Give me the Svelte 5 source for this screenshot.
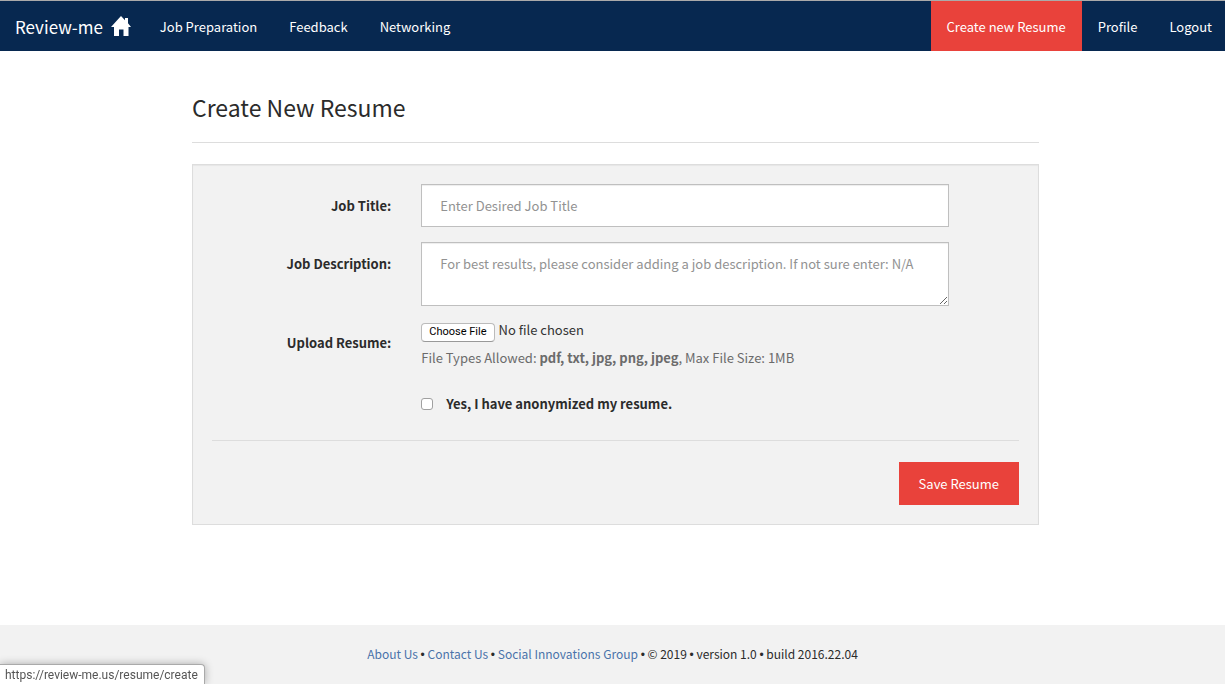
<script>
  let title = $state('');
  let description = $state('');
  let anonymized = $state(false);
</script>

<div class="page">
  <nav class="navbar">
    <a class="brand" href="#home">
      <span>Review-me</span>
      <svg class="home" viewBox="0 0 20 20" aria-hidden="true">
        <path d="M10 0 14 4.200V2H17V7.300L20 11H17.500V20H12.500V13.500H8V20H3V11H0Z" fill="#fff" />
      </svg>
    </a>
    <a href="#preparation">Job Preparation</a>
    <a href="#feedback">Feedback</a>
    <a href="#networking">Networking</a>
    <div class="right">
      <a class="active" href="#create">Create new Resume</a>
      <a href="#profile">Profile</a>
      <a class="last" href="#logout">Logout</a>
    </div>
  </nav>

  <main>
    <h1>Create New Resume</h1>
    <form class="panel">
      <div class="row">
        <label class="name" for="title">Job Title:</label>
        <div class="field">
          <input class="control" id="title" type="text" placeholder="Enter Desired Job Title" bind:value={title} />
        </div>
      </div>
      <div class="row">
        <label class="name" for="description">Job Description:</label>
        <div class="field">
          <textarea
            class="control"
            id="description"
            placeholder="For best results, please consider adding a job description. If not sure enter: N/A"
            bind:value={description}
          ></textarea>
        </div>
      </div>
      <div class="row upload">
        <label class="name" for="resume">Upload Resume:</label>
        <div class="field">
          <input id="resume" type="file" accept=".pdf,.txt,.jpg,.png,.jpeg" />
          <p class="help">File Types Allowed: <strong>pdf, txt, jpg, png, jpeg</strong>, Max File Size: 1MB</p>
          <label class="check">
            <input type="checkbox" bind:checked={anonymized} />
            <span>Yes, I have anonymized my resume.</span>
          </label>
        </div>
      </div>
      <div class="actions">
        <button type="button">Save Resume</button>
      </div>
    </form>
  </main>

  <footer>
    <a href="#about">About Us</a> <i>•</i> <a href="#contact">Contact Us</a> <i>•</i>
    <a href="#group">Social Innovations Group</a> <i>•</i> © 2019 <i>•</i> version 1.0 <i>•</i> build 2016.22.04
  </footer>
  <div class="status">https://review-me.us/resume/create</div>
</div>

<style>
  :global(body) {
    margin: 0;
    background: #fff;
  }
  .page,
  .page * {
    box-sizing: border-box;
  }
  .page {
    display: flex;
    flex-direction: column;
    min-height: 100vh;
    font: 13px/21px 'Noto Sans CJK SC', 'Noto Sans', sans-serif;
    color: #2b2b2b;
  }
  .navbar {
    display: flex;
    flex-wrap: wrap;
    background: #072850;
    border-top: 1px solid #aaa;
  }
  .navbar a {
    display: flex;
    align-items: center;
    height: 50px;
    padding: 0 16px;
    color: #fff;
    text-decoration: none;
  }
  .navbar .brand {
    gap: 8px;
    padding: 0 13px 0 15px;
    font-size: 17px;
  }
  .home {
    width: 20px;
    height: 20px;
  }
  .right {
    display: flex;
    margin-left: auto;
  }
  .navbar .active {
    background: #e9423b;
  }
  .navbar .last {
    padding-right: 13px;
  }
  main {
    flex: 1;
    width: 100%;
    max-width: 883px;
    margin: 0 auto;
    padding: 42px 15px 40px 21px;
  }
  h1 {
    margin: 0 0 21px;
    padding-bottom: 21px;
    border-bottom: 1px solid #ddd;
    font-size: 23px;
    font-weight: 400;
    line-height: 28px;
  }
  .panel {
    padding: 19px;
    background: #f2f2f2;
    border: 1px solid #ddd;
    box-shadow: inset 0 1px 1px rgba(0, 0, 0, 0.05);
  }
  .row {
    display: grid;
    grid-template-columns: 3fr 8fr 1fr;
    margin: 0 -15px 15px;
  }
  .name {
    padding: 11px 15px 0;
    font-weight: 700;
    text-align: right;
  }
  .field {
    min-width: 0;
    padding: 0 15px;
  }
  .control {
    display: block;
    width: 100%;
    height: 43px;
    padding: 10px 18px;
    background: #fff;
    border: 1px solid #bfbfbf;
    border-radius: 0;
    box-shadow: inset 0 1px 1px rgba(0, 0, 0, 0.075);
    font: inherit;
    color: #333;
  }
  textarea.control {
    height: 64px;
    overflow: auto;
    resize: vertical;
  }
  .control::placeholder {
    color: #929292;
    opacity: 1;
  }
  .upload {
    margin-bottom: 26px;
  }
  input[type='file'] {
    display: block;
    width: 100%;
    height: 22px;
    font: inherit;
    line-height: 18px;
    color: #333;
  }
  input[type='file']::file-selector-button {
    height: 19px;
    margin: 0 4px 0 0;
    padding: 0 7px;
    background: #fff;
    border: 1px solid #bbb;
    border-bottom-color: #999;
    border-radius: 4px;
    font: 11px/16px Roboto, sans-serif;
    color: #000;
  }
  .help {
    margin: 4px 0 25px;
    color: #6b6b6b;
  }
  .check {
    display: flex;
    align-items: center;
    gap: 13px;
    font-weight: 700;
  }
  .check input {
    appearance: none;
    width: 12px;
    height: 12px;
    margin: 0;
    background: #fff;
    border: 1px solid #a0a0a0;
    border-radius: 3px;
  }
  .check input:checked {
    background: #3b7ddd;
  }
  .actions {
    display: flex;
    justify-content: flex-end;
    padding-top: 21px;
    border-top: 1px solid #ddd;
  }
  button {
    height: 43px;
    padding: 0 20px;
    background: #e9423b;
    border: 0;
    font: inherit;
    color: #fff;
  }
  footer {
    padding: 18px 15px 20px;
    background: #f2f2f2;
    font-size: 12px;
    text-align: center;
  }
  footer a {
    color: #4a73aa;
    text-decoration: none;
  }
  footer i {
    font-family: 'Liberation Sans', sans-serif;
    font-style: normal;
    line-height: 1;
  }
  .status {
    position: fixed;
    bottom: 0;
    left: 0;
    height: 20px;
    padding: 0 6px 0 5px;
    background: #fff;
    border: 1px solid #aaa;
    border-width: 1px 1px 0 0;
    border-radius: 0 4px 0 0;
    box-shadow: 0 0 8px rgba(0, 0, 0, 0.3);
    font: 12px/20px Roboto, sans-serif;
    color: #555;
  }
</style>
